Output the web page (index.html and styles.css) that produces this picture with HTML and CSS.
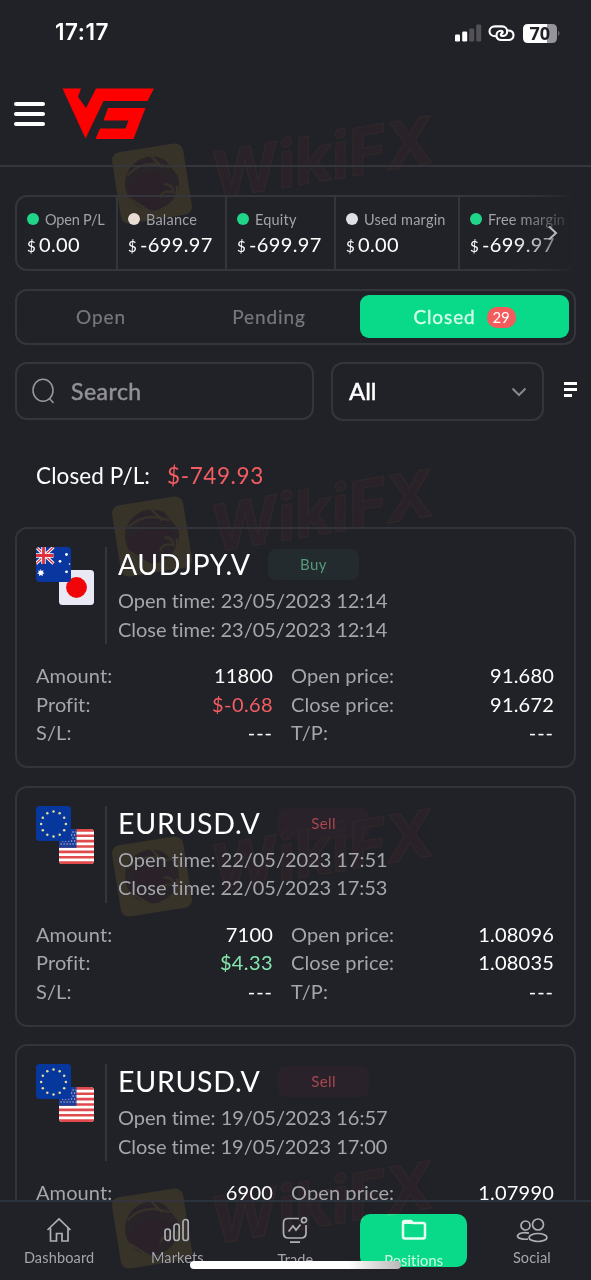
FILE: index.html
```html
<!DOCTYPE html>
<html lang="en">
<head>
<meta charset="utf-8">
<title>Positions</title>
<link rel="stylesheet" href="styles.css">
</head>
<body>
<svg class="defs" width="0" height="0">
  <defs>
    <clipPath id="round"><rect width="35" height="35" rx="3.5"/></clipPath>
    <symbol id="flag-au" viewBox="0 0 35 35">
      <g clip-path="url(#round)">
        <rect width="35" height="35" fill="#0a36a0"/>
        <path d="M0 0L17.500 16.500M17.500 0L0 16.500" stroke="#fff" stroke-width="3.200"/>
        <path d="M0 0L17.500 16.500M17.500 0L0 16.500" stroke="#e0303c" stroke-width="1.200"/>
        <path d="M7.500 0V17M0 8.500H17.500" stroke="#fff" stroke-width="4.400"/>
        <path d="M7.500 0V17M0 8.500H17.500" stroke="#e0303c" stroke-width="2.800"/>
        <path d="M4.800 22l.8 2 2-.8-.8 2 1.700 1-2 .7.300 2.200-2-1.200-1.800 1.200.2-2.100-2.200-.7 1.900-1.100-.8-2 2 .8z" fill="#fff"/>
        <g fill="#fff"><circle cx="30.500" cy="7.500" r="1.400"/><circle cx="24" cy="14.300" r="1.400"/><circle cx="33.500" cy="17" r=".8"/><circle cx="30.500" cy="24.800" r="1.400"/></g>
      </g>
    </symbol>
    <symbol id="flag-jp" viewBox="0 0 35 35"><rect width="35" height="35" rx="3.500" fill="#e9e9f6"/><circle cx="17.500" cy="17.500" r="10.400" fill="#f00509"/></symbol>
    <symbol id="flag-eu" viewBox="0 0 35 35">
      <rect width="35" height="35" rx="3.500" fill="#06379d"/>
      <g fill="#e6dd9a"><circle cx="17.500" cy="5.500" r="1.250"/><circle cx="23.700" cy="7.200" r="1.250"/><circle cx="28.200" cy="11.700" r="1.250"/><circle cx="29.900" cy="18" r="1.250"/><circle cx="28.200" cy="24.200" r="1.250"/><circle cx="23.700" cy="28.700" r="1.250"/><circle cx="17.500" cy="30.400" r="1.250"/><circle cx="11.300" cy="28.700" r="1.250"/><circle cx="6.800" cy="24.200" r="1.250"/><circle cx="5.100" cy="18" r="1.250"/><circle cx="6.800" cy="11.700" r="1.250"/><circle cx="11.300" cy="7.200" r="1.250"/></g>
    </symbol>
    <symbol id="flag-us" viewBox="0 0 35 35">
      <g clip-path="url(#round)">
        <rect width="35" height="35" fill="#fff"/>
        <path d="M0 1.350H35M0 6.730H35M0 12.120H35M0 17.500H35M0 22.880H35M0 28.270H35M0 33.650H35" stroke="#e04a4c" stroke-width="2.700"/>
        <rect width="17.500" height="18.800" fill="#1c3c98"/>
        <path d="M1.500 3H17M1.500 9H17M1.500 15H17" stroke="#dfe4f5" stroke-width="1.200" stroke-dasharray="1.200 1.800"/>
        <path d="M3 6H17M3 12H17" stroke="#dfe4f5" stroke-width="1.200" stroke-dasharray="1.200 1.800"/>
      </g>
    </symbol>
    <g id="mark">
      <g transform="translate(152 183.500) rotate(-9)">
        <rect x="-36" y="-36" width="72" height="72" rx="8" fill="#373329"/>
        <circle r="27" fill="#292427"/>
        <path d="M-21-15C-8-28 14-24 24-9 8-17-9-18-21-15zM-25 4C-17-7-7-13 6-10 15-8 20-3 22 5 13-2 10 1 7 4 13 5 16 8 17 12 9 8 4 11 3 16 1 22 4 25 8 26-8 28-22 19-25 4z" fill="#2a2226"/>
        <path d="M-23-12C-9-23 6-21 20-13M12 3C17 3 20 6 20 12 13 9 7 10 6 16" fill="none" stroke="#35312a" stroke-width="2.500"/>
        <path d="M2-29L13-14M15-26L28-4M-24 12L-6 28M24 6C25 17 16 26 4 27" fill="none" stroke="#373329" stroke-width="2.500"/>
      </g>
      <text class="mark-word" transform="translate(215 199) rotate(-9.500)" textLength="224" lengthAdjust="spacingAndGlyphs">WikiFX</text>
    </g>
  </defs>
</svg>
<div class="screen">
  <div class="status">
    <span class="clock">17:17</span>
    <svg width="110" height="24" viewBox="0 0 110 24">
      <g fill="#fff"><rect x="0" y="13.500" width="5" height="7" rx="1.300"/><rect x="7.200" y="10.500" width="5" height="10" rx="1.300"/></g>
      <g fill="#515156"><rect x="14.200" y="7.500" width="5" height="13" rx="1.300"/><rect x="21.200" y="3.500" width="5" height="17" rx="1.300"/></g>
      <g fill="none" stroke="#fff" stroke-width="2.100" stroke-linecap="round"><path d="M40.500 15.200C36.800 15.200 34.500 13 34.500 10.200S36.800 5.400 39.800 5.400H47C50.300 5.400 52.200 7.800 52.200 10.400S50.300 15 47.500 15C45.500 15 45.300 13 46.800 12.700"/><path d="M53 9.500C56.500 9.500 58.500 11.500 58.500 14.300S56.300 19 53.500 19H46.500C43.300 19 41.500 17 41.500 14.300S43.500 9.800 46 9.800C48 9.800 48.200 11.600 46.800 12"/></g>
      <path d="M73 3H92V22H73Q68 22 68 17V8Q68 3 73 3Z" fill="#fff"/>
      <path d="M92 3H97Q102 3 102 8V17Q102 22 97 22H92Z" fill="#95959b"/>
      <path d="M103.300 9.500Q105.500 12 103.300 15.500Z" fill="#85858a"/>
      <text x="74.500" y="18.800" class="battery">70</text>
    </svg>
  </div>
  <header class="header">
    <div class="burger"><i></i><i></i><i></i></div>
    <svg class="logo" width="94" height="54" viewBox="0 0 94 54"><path d="M.5 1.500H19L16 10 24 21 34 1.500H92L85.500 14H41.500L23.500 51.500ZM46 21H83.500L71.500 52H33.500L38 41.500H63.500L66.500 33.500H41.500Z" fill="#fe0000"/></svg>
  </header>

  <main class="content">
    <section class="stats">
      <div class="stat"><p class="first"><i class="dot green"></i>Open P/L</p><b><small>$</small>0.00</b></div>
      <div class="stat"><p><i class="dot cream"></i>Balance</p><b><small>$</small>-699.97</b></div>
      <div class="stat"><p><i class="dot green"></i>Equity</p><b><small>$</small>-699.97</b></div>
      <div class="stat"><p><i class="dot light"></i>Used margin</p><b><small>$</small>0.00</b></div>
      <div class="stat"><p><i class="dot green"></i>Free margin</p><b><small>$</small>-699.97</b></div>
      <div class="fade"><svg width="10" height="16" viewBox="0 0 10 16"><path d="M1 1.500L8 8 1 14.500" fill="none" stroke="#b9b9bd" stroke-width="2"/></svg></div>
    </section>

    <div class="tabs">
      <span class="tab">Open</span><span class="tab">Pending</span><span class="tab active">Closed<em>29</em></span>
    </div>

    <div class="filters">
      <div class="search">
        <svg width="24" height="27" viewBox="0 0 24 27"><g fill="none" stroke="#98989c" stroke-width="1.500"><ellipse cx="11" cy="12.200" rx="10" ry="11"/><path d="M17.500 20.500L21.500 25"/></g></svg>
        <span>Search</span>
      </div>
      <div class="select"><span>All</span><svg width="16" height="10" viewBox="0 0 16 10"><path d="M1.500 1.500L8 8 14.500 1.500" fill="none" stroke="#88888d" stroke-width="2"/></svg></div>
      <div class="sort"><i></i><i></i><i></i></div>
    </div>

    <p class="total">Closed P/L:<span class="neg">$-749.93</span></p>

    <div class="cards">
      <article class="card">
        <div class="top">
          <div class="flags"><svg class="flag quote"><use href="#flag-jp"/></svg><svg class="flag"><use href="#flag-au"/></svg></div>
          <div class="info"><div class="pair"><h2>AUDJPY.V</h2><span class="side buy">Buy</span></div><p>Open time: 23/05/2023 12:14</p><p>Close time: 23/05/2023 12:14</p></div>
        </div>
        <div class="details">
          <p>Amount:<b>11800</b></p><p>Open price:<b>91.680</b></p>
          <p>Profit:<b class="neg">$-0.68</b></p><p>Close price:<b>91.672</b></p>
          <p>S/L:<b class="dash">---</b></p><p>T/P:<b class="dash">---</b></p>
        </div>
      </article>
      <article class="card">
        <div class="top">
          <div class="flags"><svg class="flag quote"><use href="#flag-us"/></svg><svg class="flag"><use href="#flag-eu"/></svg></div>
          <div class="info"><div class="pair"><h2 class="eur">EURUSD.V</h2><span class="side sell">Sell</span></div><p>Open time: 22/05/2023 17:51</p><p>Close time: 22/05/2023 17:53</p></div>
        </div>
        <div class="details">
          <p>Amount:<b>7100</b></p><p>Open price:<b>1.08096</b></p>
          <p>Profit:<b class="pos">$4.33</b></p><p>Close price:<b>1.08035</b></p>
          <p>S/L:<b class="dash">---</b></p><p>T/P:<b class="dash">---</b></p>
        </div>
      </article>
      <article class="card">
        <div class="top">
          <div class="flags"><svg class="flag quote"><use href="#flag-us"/></svg><svg class="flag"><use href="#flag-eu"/></svg></div>
          <div class="info"><div class="pair"><h2 class="eur">EURUSD.V</h2><span class="side sell">Sell</span></div><p>Open time: 19/05/2023 16:57</p><p>Close time: 19/05/2023 17:00</p></div>
        </div>
        <div class="details">
          <p>Amount:<b>6900</b></p><p>Open price:<b>1.07990</b></p>
        </div>
      </article>
    </div>
  </main>

  <nav class="nav">
    <div class="item"><svg width="28" height="28" viewBox="0 0 28 28"><path d="M2.500 14L14 3 25.500 14M5.500 12V25H11.500V17.500H17V25H23V12" class="line"/></svg><span>Dashboard</span></div>
    <div class="item"><svg width="28" height="28" viewBox="0 0 28 28"><g class="line"><rect x="2" y="13" width="5.200" height="11.500" rx="2.500"/><rect x="11" y="8" width="5.200" height="16.500" rx="2.500"/><rect x="20" y="3.500" width="5.200" height="21" rx="2.500"/></g></svg><span>Markets</span></div>
    <div class="item"><svg width="28" height="28" viewBox="0 0 28 28"><g class="line"><path d="M18 2.500H7Q2.500 2.500 2.500 7V17Q2.500 22 7.500 22H20Q25 22 25 17V9"/><circle cx="23" cy="4.200" r="2.500"/><path d="M7.500 15.500L12 10 15 14 19.500 8.500M9 26.200H19"/></g></svg><span class="low">Trade</span></div>
    <div class="item"><div class="pill"><svg width="26" height="22" viewBox="0 0 26 22"><path d="M2 4V17.500Q2 19.500 4 19.500H22Q24 19.500 24 17.500V6Q24 4 22 4H12L10 2H4Q2 2 2 4Z" fill="none" stroke="#eafff3" stroke-width="2.500"/><path d="M3 2H10L12 5H3Z" fill="#eafff3"/></svg><span>Positions</span></div></div>
    <div class="item"><svg width="34" height="28" viewBox="0 0 34 28"><g class="line"><circle cx="10.500" cy="9.500" r="4.500"/><circle cx="23" cy="8.500" r="5.500"/><ellipse cx="23" cy="21.500" rx="9" ry="4"/><path d="M14 17.200C9 16 3 17 2.500 20 2.400 22.500 8 23.600 13 23.100"/></g></svg><span>Social</span></div>
    <div class="home"></div>
  </nav>
  <svg class="overlay" width="591" height="1280" viewBox="0 0 591 1280"><use href="#mark"/><use href="#mark" y="353"/><use href="#mark" y="693"/><use href="#mark" y="1045"/></svg>
</div>
</body>
</html>
```
FILE: styles.css
```css
* { box-sizing: border-box; }
body { margin: 0; background: #212228; color: #fff; font-family: Lato, "Noto Sans", sans-serif; }
p, h2 { margin: 0; font-weight: 400; }
b { font-weight: 400; }
i, em { font-style: normal; }
svg { display: block; flex: none; }
.defs { position: absolute; }
.screen { position: relative; width: 591px; height: 1280px; display: flex; flex-direction: column; overflow: hidden; background: #212228; }
.status { height: 65px; display: flex; justify-content: space-between; align-items: center; padding: 0 26px 0 55px; }
.clock { font: 600 22.500px/24px Inter, sans-serif; letter-spacing: .5px; padding-bottom: 1px; }
.battery { font: 700 18px "Open Sans", sans-serif; fill: #202126; }
.header { height: 102px; display: flex; align-items: center; padding: 0 0 3px 14px; gap: 17px; border-bottom: 2px solid #35363b; }
.burger { width: 31px; display: flex; flex-direction: column; gap: 6px; padding-top: 1px; }
.burger i { height: 4px; border-radius: 2px; background: #fff; }
.content { flex: 1; min-height: 0; overflow: hidden; padding: 28px 15px 0; }

.stats { position: relative; display: grid; grid-template-columns: 99px 109px 109px 124px 1fr; height: 76px; border: 2px solid #35363b; border-radius: 12px; }
.stat { padding: 12px 0 0 10px; white-space: nowrap; }
.stat + .stat { border-left: 2px solid #35363b; }
.stat p { display: flex; align-items: center; gap: 6px; height: 20px; font-size: 14.500px; letter-spacing: .2px; color: #a2a2a7; }
.stat .first { letter-spacing: -.2px; }
.dot { width: 12px; height: 12px; border-radius: 50%; flex: none; }
.green { background: #20d488; }
.cream { background: #e9dcd3; }
.light { background: #dfdfe8; }
.stat b { display: block; font-size: 20px; line-height: 30px; letter-spacing: .35px; }
.stat small { font-size: 15px; margin-right: 3px; }
.fade { position: absolute; inset: -2px -3px -2px auto; width: 66px; display: flex; align-items: center; padding-left: 37px; background: linear-gradient(90deg, rgba(33,34,40,0), rgba(33,34,40,.45) 55%, rgba(33,34,40,.95) 95%); }

.tabs { margin-top: 18px; height: 56px; display: grid; grid-template-columns: 158px 178px 209px; justify-content: end; padding: 5px; border: 2px solid #35363b; border-radius: 12px; }
.tab { display: flex; align-items: center; justify-content: center; height: 41px; font-size: 19px; letter-spacing: .9px; color: #77777c; padding-right: 4px; -webkit-text-stroke: .2px; }
.active { background: #08da89; border-radius: 9px; color: #d6ffeb; -webkit-text-stroke: .3px; height: 43px; margin-top: -1px; padding: 0 0 1px; gap: 11px; }
.active em { width: 29px; height: 21px; border-radius: 10px; background: #f45b5d; color: #fff; font-size: 15px; line-height: 21px; letter-spacing: 0; text-align: center; -webkit-text-stroke: 0; margin-top: 2px; }

.filters { display: flex; margin-top: 17px; height: 59px; gap: 17px; }
.search { width: 299px; height: 58px; border: 2px solid #35363b; border-radius: 12px; display: flex; align-items: center; gap: 15px; padding-left: 15px; font-size: 23px; color: #919196; letter-spacing: .5px; -webkit-text-stroke: .5px; }
.select { width: 213px; border: 2px solid #35363b; border-radius: 12px; display: flex; align-items: center; justify-content: space-between; padding: 0 15px 0 16px; font-size: 24px; -webkit-text-stroke: .5px; }
.select span { padding-bottom: 2px; }
.sort { margin: 20px -2px 0 3px; display: flex; flex-direction: column; gap: 3px; width: 13px; flex: none; }
.sort i { height: 3px; background: #fff; }
.sort i:last-child { width: 8px; }

.total { padding-left: 21px; margin-top: 38px; height: 34px; font-size: 22.500px; line-height: 34px; letter-spacing: .1px; }
.total span { margin-left: 17px; letter-spacing: .6px; }
.neg { color: #f35d62; }
.pos { color: #85e5ad; }

.cards { display: flex; flex-direction: column; gap: 17.500px; margin-top: 34px; }
.card { height: 241px; flex: none; border: 2px solid #333439; border-radius: 12px; padding: 18px 20px 18px 19px; }
.top { display: flex; height: 97px; }
.flags { width: 71px; position: relative; border-right: 2px solid #35363b; }
.flag { position: absolute; left: 0; top: 0; width: 35px; height: 35px; }
.quote { left: 23px; top: 23px; }
.info { padding-left: 11px; color: #a6a6aa; font-size: 20px; line-height: 28.700px; letter-spacing: -.03px; white-space: nowrap; }
.pair { display: flex; align-items: center; gap: 17px; height: 35px; margin-bottom: 4px; color: #fff; letter-spacing: .7px; }
.pair h2 { font-size: 28.500px; line-height: 35px; letter-spacing: .5px; width: 133px; }
.pair .eur { width: 143px; letter-spacing: .75px; }
.side { width: 91px; height: 31px; border-radius: 8px; font-size: 15px; line-height: 30px; text-align: center; letter-spacing: .4px; }
.buy { background: #232b2e; color: #579879; }
.sell { background: #2a222a; color: #a94750; }
.details { margin-top: 17px; display: grid; grid-template-columns: 237px 263px; column-gap: 18px; font-size: 20px; line-height: 28.700px; letter-spacing: .1px; }
.details p { display: flex; justify-content: space-between; color: #a6a6aa; }
.details b { color: #fff; letter-spacing: .2px; }
.details .neg { color: #f35d62; letter-spacing: .4px; }
.details .pos { color: #85e5ad; letter-spacing: .4px; }
.details .dash { letter-spacing: 1px; }

.nav { position: relative; height: 80px; flex: none; display: grid; grid-template-columns: repeat(5, 1fr); border-top: 2px solid #2a333d; background: #212228; }
.item { display: flex; flex-direction: column; align-items: center; padding-top: 14px; color: #a6a6aa; font-size: 14.500px; letter-spacing: .15px; }
.item > span { line-height: 18px; margin-top: 5px; }
.item > .low { margin-top: 7px; }
.line { fill: none; stroke: #b0b0b4; stroke-width: 1.700; }
.pill { width: 107px; height: 53px; margin-top: -2px; background: #08da89; border-radius: 10px; display: flex; flex-direction: column; align-items: center; padding-top: 5px; color: #d0fbe5; }
.pill span { line-height: 18px; margin-top: 11px; }
.home { position: absolute; left: 190px; top: 59px; width: 211px; height: 8px; border-radius: 4px; background: linear-gradient(90deg, #fff 75%, #b8b8b8); }
.overlay { position: absolute; left: 0; top: 0; pointer-events: none; mix-blend-mode: lighten; }
.mark-word { font: italic 700 64px Inter, sans-serif; fill: #292126; stroke: #2f2729; stroke-width: 1.500; }
```
